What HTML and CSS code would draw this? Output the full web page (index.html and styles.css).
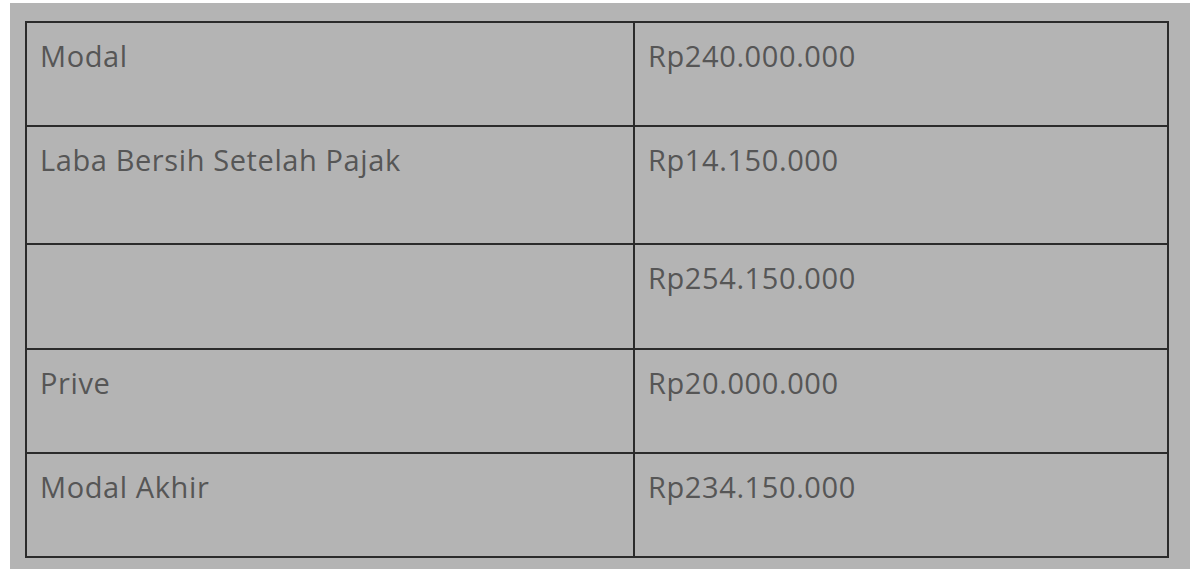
FILE: index.html
```html
<!DOCTYPE html>
<html>
<head>
<meta charset="utf-8">
<link rel="stylesheet" href="styles.css">
</head>
<body>
<div class="panel">
  <table class="ledger">
    <colgroup><col class="c1"><col class="c2"></colgroup>
    <tr class="r1"><td>Modal</td><td>Rp240.000.000</td></tr>
    <tr class="r2"><td>Laba Bersih Setelah Pajak</td><td>Rp14.150.000</td></tr>
    <tr class="r3"><td></td><td>Rp254.150.000</td></tr>
    <tr class="r4"><td>Prive</td><td>Rp20.000.000</td></tr>
    <tr class="r5"><td>Modal Akhir</td><td>Rp234.150.000</td></tr>
  </table>
</div>
</body>
</html>
```
FILE: styles.css
```css
html, body {
  margin: 0;
  padding: 0;
  background: #ffffff;
}
body {
  padding: 3px 10px 0 10px;
}
.panel {
  background: #b4b4b4;
  height: 566px;
  padding: 18px 0 0 15px;
  box-sizing: border-box;
}
.ledger {
  border-collapse: collapse;
  width: 1142px;
  table-layout: fixed;
  font-family: "Open Sans", "Liberation Sans", sans-serif;
  font-size: 29px;
  letter-spacing: 0.6px;
  color: #565656;
}
.c1 { width: 608px; }
.c2 { width: 534px; }
.ledger td {
  border: 2px solid #2b2b2b;
  vertical-align: top;
  padding: 15px 14px 0 13px;
  line-height: 36px;
  box-sizing: border-box;
}
.r1 td { height: 104px; }
.r2 td { height: 118px; }
.r3 td { height: 105px; }
.r4 td { height: 104px; }
.r5 td { height: 104px; }
```
